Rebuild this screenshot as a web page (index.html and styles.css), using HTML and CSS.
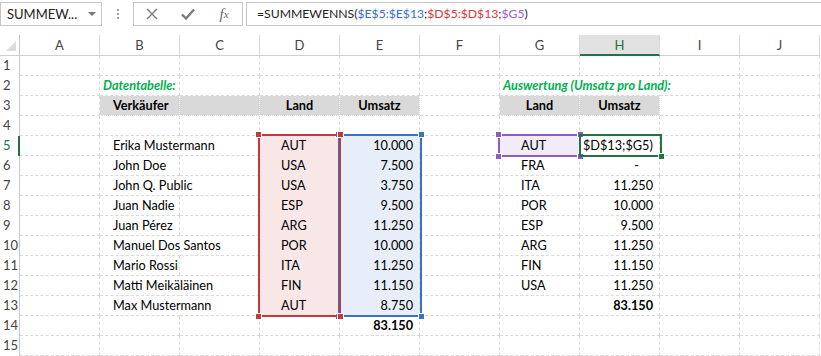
FILE: index.html
```html
<!DOCTYPE html>
<html lang="de">
<head>
  <meta charset="UTF-8">
  <title>SUMMEWENNS</title>
  <link rel="stylesheet" href="styles.css">
</head>
<body>
  <div class="formula-bar">
    <div class="name-box"><span>SUMMEW...</span><span class="caret"></span></div>
    <div class="grip"><i></i><i></i><i></i></div>
    <div class="fx-buttons">
      <span class="btn">
        <svg width="12" height="12" viewBox="0 0 12 12"><path d="M1 1 L11 11 M11 1 L1 11" stroke="#7a7a7a" stroke-width="1.4" fill="none"/></svg>
      </span>
      <span class="btn">
        <svg width="14" height="12" viewBox="0 0 14 12"><path d="M1 6.5 L5 10.5 L13 1.5" stroke="#7a7a7a" stroke-width="2.4" fill="none"/></svg>
      </span>
      <span class="btn fx">f<small>x</small></span>
    </div>
    <div class="formula">=SUMMEWENNS(<span class="ref-blue">$E$5:$E$13</span>;<span class="ref-red">$D$5:$D$13</span>;<span class="ref-purple">$G5</span>)</div>
  </div>

  <div class="sheet">
    <div class="row head">
      <div class="corner"></div>
      <div>A</div><div>B</div><div>C</div><div>D</div><div>E</div>
      <div>F</div><div>G</div><div class="active">H</div><div>I</div><div>J</div>
    </div>
    <div class="row">
      <div class="rh">1</div>
      <div></div><div></div><div></div><div></div><div></div>
      <div></div><div></div><div></div><div></div><div></div>
    </div>
    <div class="row">
      <div class="rh">2</div>
      <div></div><div class="title">Datentabelle:</div><div></div><div></div><div></div>
      <div></div><div class="title spill">Auswertung (Umsatz pro Land):</div><div class="spill"></div><div></div><div></div>
    </div>
    <div class="row">
      <div class="rh">3</div>
      <div></div><div class="th name">Verkäufer</div><div class="th"></div><div class="th center">Land</div><div class="th center">Umsatz</div>
      <div></div><div class="th center">Land</div><div class="th center">Umsatz</div><div></div><div></div>
    </div>
    <div class="row">
      <div class="rh">4</div>
      <div></div><div></div><div></div><div></div><div></div>
      <div></div><div></div><div></div><div></div><div></div>
    </div>
    <div class="row">
      <div class="rh current">5</div>
      <div></div><div class="name spill">Erika Mustermann</div><div></div><div class="land red">AUT</div><div class="num blue">10.000</div>
      <div></div><div class="land purple">AUT</div><div class="editing">$D$13;$G5)</div><div></div><div></div>
    </div>
    <div class="row">
      <div class="rh">6</div>
      <div></div><div class="name">John Doe</div><div></div><div class="land red">USA</div><div class="num blue">7.500</div>
      <div></div><div class="land">FRA</div><div class="num dash">-</div><div></div><div></div>
    </div>
    <div class="row">
      <div class="rh">7</div>
      <div></div><div class="name spill">John Q. Public</div><div></div><div class="land red">USA</div><div class="num blue">3.750</div>
      <div></div><div class="land">ITA</div><div class="num">11.250</div><div></div><div></div>
    </div>
    <div class="row">
      <div class="rh">8</div>
      <div></div><div class="name">Juan Nadie</div><div></div><div class="land red">ESP</div><div class="num blue">9.500</div>
      <div></div><div class="land">POR</div><div class="num">10.000</div><div></div><div></div>
    </div>
    <div class="row">
      <div class="rh">9</div>
      <div></div><div class="name">Juan Pérez</div><div></div><div class="land red">ARG</div><div class="num blue">11.250</div>
      <div></div><div class="land">ESP</div><div class="num">9.500</div><div></div><div></div>
    </div>
    <div class="row">
      <div class="rh">10</div>
      <div></div><div class="name spill">Manuel Dos Santos</div><div></div><div class="land red">POR</div><div class="num blue">10.000</div>
      <div></div><div class="land">ARG</div><div class="num">11.250</div><div></div><div></div>
    </div>
    <div class="row">
      <div class="rh">11</div>
      <div></div><div class="name">Mario Rossi</div><div></div><div class="land red">ITA</div><div class="num blue">11.250</div>
      <div></div><div class="land">FIN</div><div class="num">11.150</div><div></div><div></div>
    </div>
    <div class="row">
      <div class="rh">12</div>
      <div></div><div class="name spill">Matti Meikäläinen</div><div></div><div class="land red">FIN</div><div class="num blue">11.150</div>
      <div></div><div class="land">USA</div><div class="num">11.250</div><div></div><div></div>
    </div>
    <div class="row">
      <div class="rh">13</div>
      <div></div><div class="name spill">Max Mustermann</div><div></div><div class="land red">AUT</div><div class="num blue">8.750</div>
      <div></div><div></div><div class="num total">83.150</div><div></div><div></div>
    </div>
    <div class="row">
      <div class="rh">14</div>
      <div></div><div></div><div></div><div></div><div class="num total">83.150</div>
      <div></div><div></div><div></div><div></div><div></div>
    </div>
    <div class="row">
      <div class="rh">15</div>
      <div></div><div></div><div></div><div></div><div></div>
      <div></div><div></div><div></div><div></div><div></div>
    </div>

    <!-- range highlights of the formula being edited -->
    <div class="range range-blue"><span class="h tl"></span><span class="h tr"></span><span class="h bl"></span><span class="h br"></span></div>
    <div class="range range-red"><span class="h tl"></span><span class="h tr"></span><span class="h bl"></span><span class="h br"></span></div>
    <div class="range range-purple"><span class="h tl"></span><span class="h tr"></span><span class="h bl"></span><span class="h br"></span></div>
    <div class="range range-active"><span class="h br"></span></div>
  </div>
</body>
</html>
```

FILE: styles.css
```css
body {
  margin: 0;
  font-family: Lato, "Liberation Sans", sans-serif;
  background-color: #fff;
  color: #000;
  overflow: hidden;
}

/* formula bar */
.formula-bar {
  display: flex;
  padding-top: 2px;
  height: 24px;
}

.name-box {
  width: 102px;
  height: 24px;
  box-sizing: border-box;
  border: 1px solid #c6c6c6;
  display: flex;
  align-items: center;
  justify-content: space-between;
  padding: 0 5px 0 6px;
  font-size: 13px;
  color: #222;
}

.caret {
  width: 0;
  height: 0;
  border-left: 4px solid transparent;
  border-right: 4px solid transparent;
  border-top: 4px solid #777;
}

.grip {
  width: 31px;
  display: flex;
  flex-direction: column;
  align-items: center;
  justify-content: center;
  gap: 2px;
}

.grip i {
  width: 2px;
  height: 2px;
  background-color: #a0a0a0;
}

.fx-buttons {
  width: 110px;
  height: 24px;
  box-sizing: border-box;
  border: 1px solid #c6c6c6;
  display: flex;
}

.btn {
  width: 36px;
  display: flex;
  align-items: center;
  justify-content: center;
}

.fx {
  font-family: "Liberation Serif", serif;
  font-style: italic;
  font-size: 15px;
  color: #6a6a6a;
}

.fx small {
  font-size: 11px;
}

.formula {
  flex: 1;
  margin-left: 3px;
  height: 24px;
  box-sizing: border-box;
  border: 1px solid #c6c6c6;
  border-right: none;
  padding-left: 10px;
  font-size: 12.2px;
  line-height: 22px;
  color: #222;
  white-space: nowrap;
}

.ref-blue { color: #3a6fd0; }
.ref-red { color: #d23a3a; }
.ref-purple { color: #9a60c8; }

/* sheet grid */
.sheet {
  position: relative;
  margin-top: 9px;
}

.row {
  display: grid;
  grid-template-columns: 20px repeat(10, 80px);
  height: 20px;
}

.row > div {
  box-sizing: border-box;
  border-right: 1px dashed #d9d9d9;
  border-bottom: 1px dashed #d9d9d9;
  white-space: nowrap;
  overflow: hidden;
  font-size: 12.7px;
  line-height: 19px;
  padding: 0 6px;
}

.row.head {
  height: 21px;
}

.row.head > div {
  border-right: 1px solid #dadada;
  border-bottom: 1px solid #d0d0d0;
  text-align: center;
  color: #444;
  font-size: 13px;
  line-height: 20px;
}

.row.head > .active {
  background-color: #e1e1e1;
  color: #217346;
  border-bottom: 2px solid #217346;
}

.row.head > .corner {
  position: relative;
  border-right: 1px solid #c6c6c6;
}

.corner::after {
  content: "";
  position: absolute;
  right: 3px;
  bottom: 4px;
  border-left: 10px solid transparent;
  border-bottom: 10px solid #dcdcdc;
}

.row > .rh {
  border-bottom: none;
  border-right: 1px solid #c6c6c6;
  padding: 0 0 0 3px;
  color: #444;
  font-size: 13px;
}

.row > .rh.current {
  color: #217346;
  border-right: 2px solid #217346;
}

.row > .spill {
  overflow: visible;
  border-right-color: transparent;
}

.title {
  color: #00b050;
  font-weight: bold;
  font-style: italic;
}

.row > .title {
  padding-left: 3px;
}

.row > .th {
  background-color: #d9d9d9;
  font-weight: bold;
  border-right: 1px dotted #fff;
  border-bottom: 1px dotted #fff;
}

.row > .name {
  padding-left: 13px;
}

.row > .land {
  padding-left: 21px;
}

.center {
  text-align: center;
}

.num {
  text-align: right;
}

.row > .dash {
  padding-right: 20px;
}

.total {
  font-weight: bold;
}

.row > .editing {
  padding-left: 3px;
}

.row > .red {
  background-color: #f9e7e7;
  border-bottom-color: transparent;
}

.row > .blue {
  background-color: #e7eef9;
  border-bottom-color: transparent;
}

.row > .purple {
  background-color: #f1ecf8;
}

/* highlighted ranges */
.range {
  position: absolute;
  box-sizing: border-box;
  border: 2px solid;
}

.range-red {
  left: 258px;
  top: 99px;
  width: 83px;
  height: 183px;
  border-color: #c1393f;
}

.range-blue {
  left: 338px;
  top: 99px;
  width: 84px;
  height: 183px;
  border-color: #3a70c8;
}

.range-purple {
  left: 498px;
  top: 99px;
  width: 83px;
  height: 23px;
  border-color: #8c5cc4;
}

.range-active {
  left: 579px;
  top: 99px;
  width: 83px;
  height: 23px;
  border-color: #217346;
}

.h {
  position: absolute;
  width: 5px;
  height: 5px;
  border: 1px solid #fff;
}

.range-red .h { background-color: #c1393f; }
.range-blue .h { background-color: #3a70c8; }
.range-purple .h { background-color: #8c5cc4; }
.range-active .h { background-color: #217346; }

.tl { left: -5px; top: -5px; }
.tr { right: -5px; top: -5px; }
.bl { left: -5px; bottom: -5px; }
.br { right: -5px; bottom: -5px; }
```
